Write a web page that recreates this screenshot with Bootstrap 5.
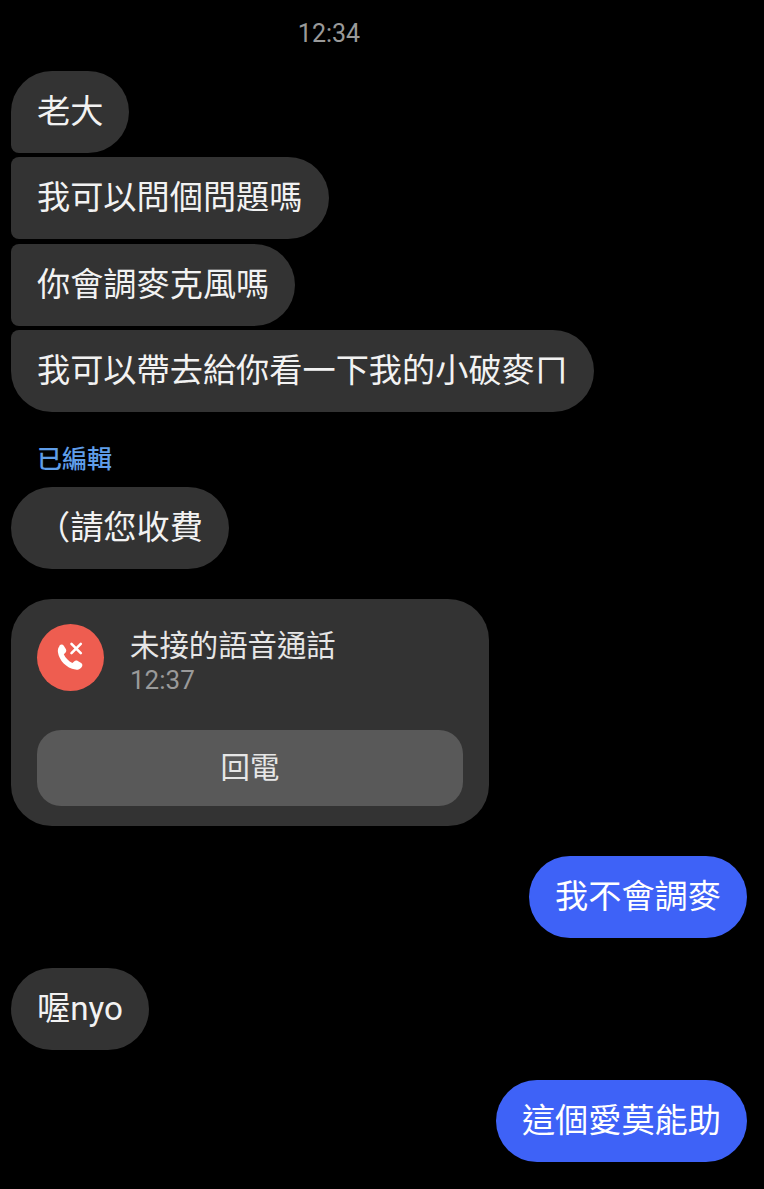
<!doctype html>
<html lang="zh-Hant">
<head>
<meta charset="utf-8">
<title>Chat</title>
<link href="https://cdn.jsdelivr.net/npm/bootstrap@5.3.0/dist/css/bootstrap.min.css" rel="stylesheet">
<style>
html,body{background:#000;}
body{width:764px;height:1189px;overflow:hidden;font-family:Roboto,"Noto Sans CJK TC",sans-serif;color:#f2f2f2;}
.thread{padding:0 17px 0 11px;}
.stamp{font-size:25px;line-height:30px;color:#9a9a9a;padding:19px 100px 0 0;margin-bottom:22px;}
.bub{height:82px;border-radius:41px;padding:0 26px;font-size:33.2px;line-height:82px;white-space:nowrap;background:#333;}
.bub-in-first{border-radius:41px 41px 41px 8px;}
.bub-in-mid{border-radius:8px 41px 41px 8px;}
.bub-in-last{border-radius:8px 41px 41px 41px;}
.bub-out{background:#3e62f7;color:#fff;}
.stack{gap:4.4px;}
.edited{font-size:25px;line-height:30px;color:#5f9de8;padding-left:26px;margin:33px 0 12px;font-weight:500;}
.callcard{width:478px;height:227px;background:#333;border-radius:41px;padding:25px 26px;margin-top:30px;}
.callicon{width:67px;height:67px;background:#ee5d50;}
.calltitle{font-size:29.4px;line-height:36px;color:#e6e6e6;}
.calltime{font-size:26px;line-height:32px;color:#9a9a9a;}
.callinfo{margin-left:26px;margin-top:4px;}
.callback{height:76px;margin-top:34px;width:100%;background:#595959;border:0;border-radius:24px;font-size:29.4px;color:#e6e6e6;padding:0;}
.gap30{margin-top:30px;}
</style>
</head>
<body>
<div class="thread d-flex flex-column">
  <div class="stamp text-center">12:34</div>
  <div class="d-flex flex-column align-items-start stack">
    <div class="bub bub-in-first">老大</div>
    <div class="bub bub-in-mid">我可以問個問題嗎</div>
    <div class="bub bub-in-mid">你會調麥克風嗎</div>
    <div class="bub bub-in-last">我可以帶去給你看一下我的小破麥ㄇ</div>
  </div>
  <div class="edited">已編輯</div>
  <div class="align-self-start bub">（請您收費</div>
  <div class="callcard">
    <div class="d-flex align-items-start">
      <div class="callicon rounded-circle flex-shrink-0 d-flex align-items-center justify-content-center">
        <svg width="67" height="67" viewBox="0 0 67 67" fill="none">
          <path d="M22.5 21.5c1.4-1.3 3.3-1.2 4.3.3l2 3.2c.8 1.2.6 2.7-.4 3.7l-1.6 1.6c1.6 3.6 4.9 7 8.6 8.7l1.7-1.6c1-1 2.500-1.200 3.700-.4l3.400 2.100c1.500 1 1.600 3 .2 4.300-1.700 1.700-3.600 2.600-6.100 2.200-8.900-1.500-16.200-9.100-17.400-17.600-.3-2.600.5-4.500 1.600-6z" fill="#fff"/>
          <path d="M34.500 19.800l9.300 9.300M43.800 19.800l-9.300 9.300" stroke="#fff" stroke-width="2.600" stroke-linecap="round"/>
        </svg>
      </div>
      <div class="callinfo">
        <div class="calltitle">未接的語音通話</div>
        <div class="calltime">12:37</div>
      </div>
    </div>
    <button type="button" class="btn callback">回電</button>
  </div>
  <div class="align-self-end bub bub-out gap30">我不會調麥</div>
  <div class="align-self-start bub gap30">喔nyo</div>
  <div class="align-self-end bub bub-out gap30">這個愛莫能助</div>
</div>
</body>
</html>
